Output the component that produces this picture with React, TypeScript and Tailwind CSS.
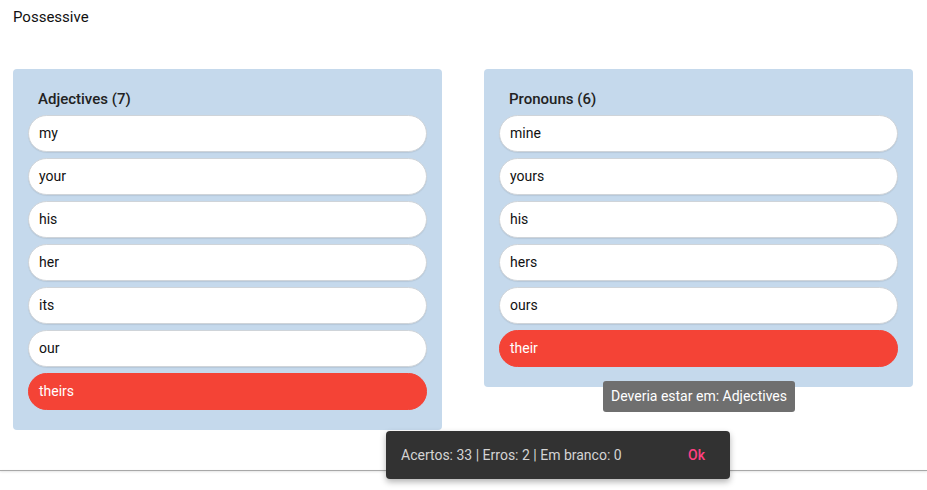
import React from "react";

const adjectives = ["my", "your", "his", "her", "its", "our", "theirs"];
const pronouns = ["mine", "yours", "his", "hers", "ours", "their"];
const wrong = new Set(["theirs", "their"]);

function Column({ title, items }: { title: string; items: string[] }) {
  return (
    <div className="w-[429px] rounded-[4px] bg-[#c5d9ec] px-[15px] pt-[20px] pb-[20px]">
      <h2 className="px-[10px] text-[15px] leading-[20px] font-medium text-[#222]">
        {title} ({items.length})
      </h2>
      <ul className="mt-[6px] flex flex-col gap-[6px]">
        {items.map((w) => (
          <li
            key={w}
            className={
              wrong.has(w)
                ? "flex h-[37px] items-center rounded-full border border-[#f44336] bg-[#f44336] pl-[10px] text-[14px] text-white"
                : "flex h-[37px] items-center rounded-full border border-[#cfd4d9] bg-white pl-[10px] text-[14px] text-[#111] shadow-[0_1px_1px_rgba(0,0,0,0.08)]"
            }
          >
            {w}
          </li>
        ))}
      </ul>
    </div>
  );
}

export default function App() {
  return (
    <div className="relative h-[490px] w-[927px] overflow-hidden bg-white font-['Roboto',sans-serif]">
      <p className="px-[13px] pt-[8px] text-[15px] leading-[18px] text-[#111]">Possessive</p>
      <div className="mt-[43px] flex items-start gap-[42px] px-[13px]">
        <Column title="Adjectives" items={adjectives} />
        <Column title="Pronouns" items={pronouns} />
      </div>
      <div className="mt-[40px] border-t border-[#a8a8a8] shadow-[0_1px_2px_rgba(0,0,0,0.15)]" />

      <div className="absolute left-[603px] top-[381px] flex h-[31px] w-[192px] items-center justify-center rounded-[3px] bg-[#6f6f6f] text-[14px] text-white">
        Deveria estar em: Adjectives
      </div>

      <div className="absolute left-[386px] top-[431px] flex h-[48px] w-[344px] items-center rounded-[4px] bg-[#323232] pl-[15px] text-[14px] shadow-[0_3px_6px_rgba(0,0,0,0.3)]">
        <span className="text-[#d4d4d4]">Acertos: 33 | Erros: 2 | Em branco: 0</span>
        <span className="ml-auto mr-[25px] font-medium text-[#ff4081]">Ok</span>
      </div>
    </div>
  );
}
